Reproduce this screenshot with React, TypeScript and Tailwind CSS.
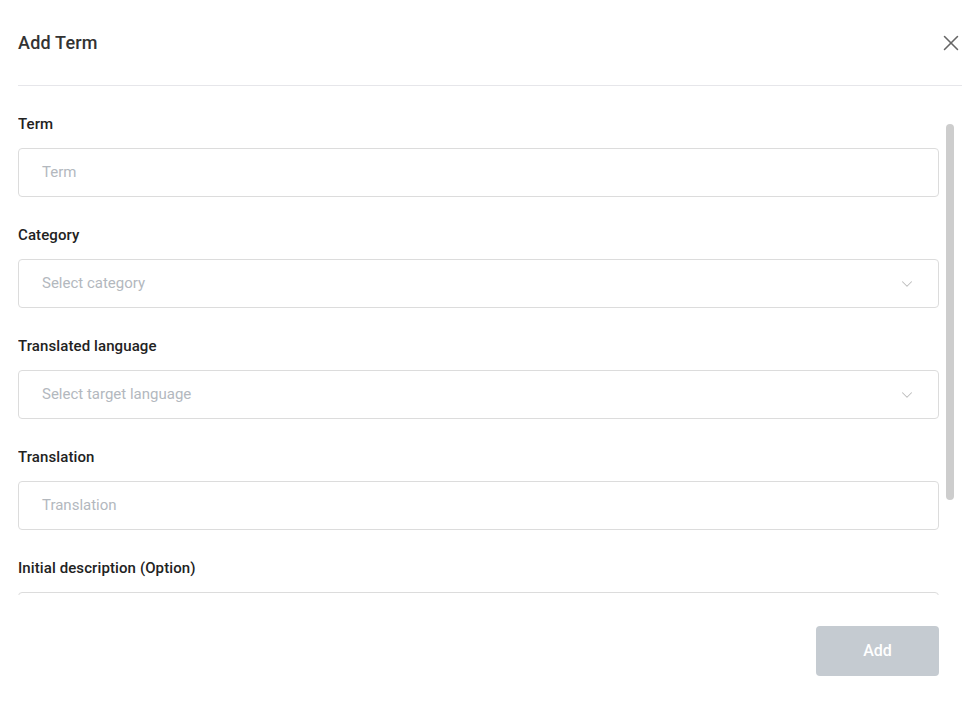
import { X, ChevronDown } from "lucide-react"

type Field = {
  label: string
  placeholder?: string
  select?: boolean
}

const fields: Field[] = [
  { label: "Term", placeholder: "Term" },
  { label: "Category", placeholder: "Select category", select: true },
  { label: "Translated language", placeholder: "Select target language", select: true },
  { label: "Translation", placeholder: "Translation" },
  { label: "Initial description (Option)", placeholder: "" },
]

function FieldRow({ field }: { field: Field }) {
  return (
    <div className="flex flex-col">
      <label className="text-[15px] leading-4 font-medium text-[#222] tracking-[0.1px]">{field.label}</label>
      <div className="mt-4 h-[49px] shrink-0 flex items-center justify-between border border-[#dcdcdc] rounded-[4px] pl-[23px] pr-[22px]">
        <span className="text-[15px] text-[#b3b8be]">{field.placeholder}</span>
        {field.select && <ChevronDown className="w-[18px] h-[18px] text-[#bcbcbc]" strokeWidth={1.4} />}
      </div>
    </div>
  )
}

export default function App() {
  return (
    <div className="w-full h-[706px] bg-white flex flex-col font-['Roboto',sans-serif]">
      {/* header */}
      <div className="h-[86px] shrink-0 ml-[18px] mr-[11px] flex items-center justify-between border-b border-[#e6e6ea]">
        <h1 className="text-[18px] font-medium text-[#333] tracking-[0.2px]">Add Term</h1>
        <button className="-mr-[2px] text-[#666]">
          <X className="w-[26px] h-[26px]" strokeWidth={1.4} />
        </button>
      </div>

      {/* body */}
      <div className="h-[509px] shrink-0 flex pl-[18px]">
        <div className="w-[921px] overflow-hidden pt-[30px] flex flex-col gap-[30px]">
          {fields.map((f) => (
            <FieldRow key={f.label} field={f} />
          ))}
        </div>
        <div className="ml-[7px] mt-[38px] w-2 h-[376px] rounded-full bg-[#cdcdcd]" />
      </div>

      {/* footer */}
      <div className="flex justify-end pr-[34px] pt-[31px]">
        <button className="w-[123px] h-[50px] rounded-[4px] bg-[#c5cbd1] text-white text-[16px] font-medium">
          Add
        </button>
      </div>
    </div>
  )
}
